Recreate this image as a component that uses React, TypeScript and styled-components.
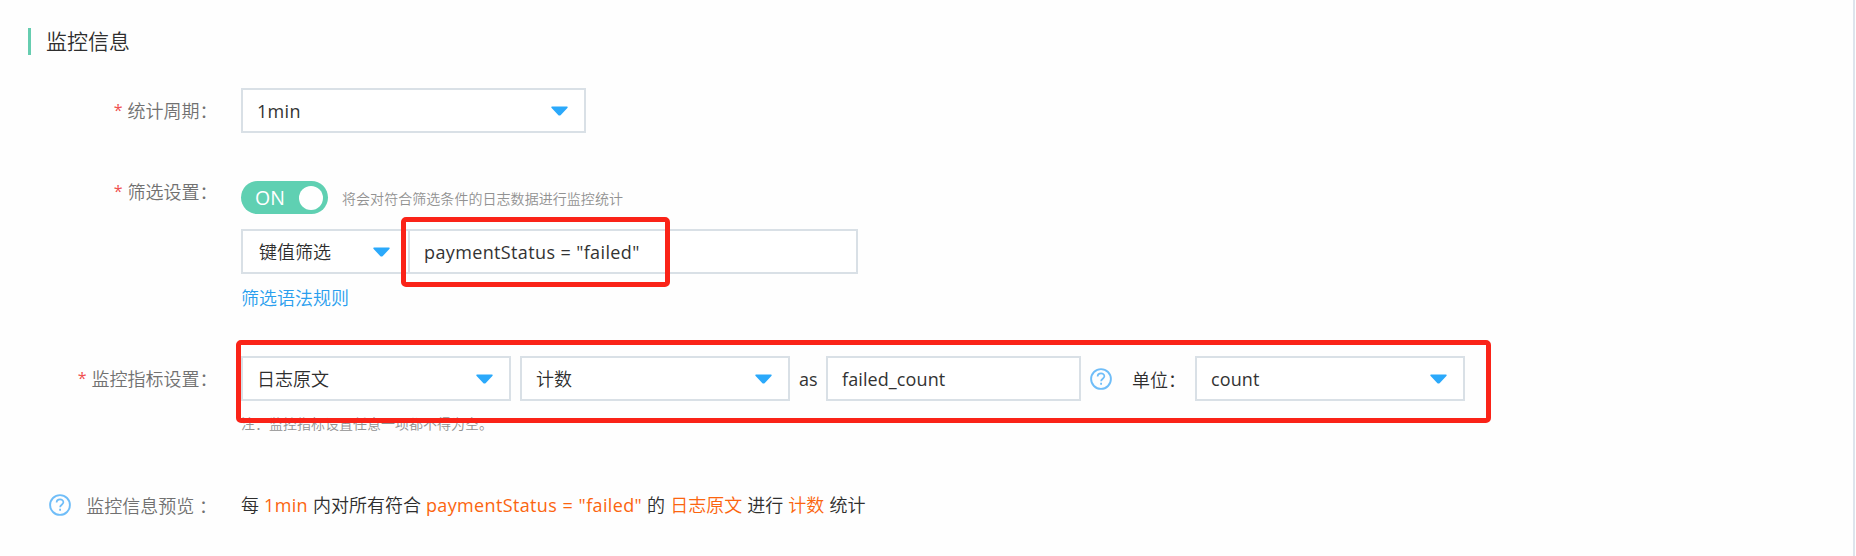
import React from "react";
import styled, { createGlobalStyle } from "styled-components";

const GlobalStyle = createGlobalStyle`
  body {
    margin: 0;
    background: #fefefe;
    font-family: "Open Sans", "Noto Sans CJK SC DemiLight", "Noto Sans CJK SC", sans-serif;
    font-size: 18px;
    color: #2e2e2e;
  }
  * { box-sizing: border-box; }
`;

const Panel = styled.main`
  width: 1855px;
  height: 556px;
  padding-top: 28px;
  border-right: 2px solid #dde4ec;
  overflow: hidden;
`;

const Title = styled.h2`
  margin: 0 0 33px 28px;
  padding-left: 15px;
  height: 27px;
  border-left: 3px solid #66cdb0;
  font-size: 21px;
  line-height: 27px;
  font-weight: 400;
`;

const Row = styled.section<{ $gap?: number }>`
  display: flex;
  align-items: flex-start;
  margin-bottom: ${(p) => p.$gap ?? 0}px;
`;

const Label = styled.div<{ $height: number; $pad?: number }>`
  display: flex;
  align-items: center;
  justify-content: flex-end;
  width: 241px;
  height: ${(p) => p.$height}px;
  padding-right: ${(p) => p.$pad ?? 23.5}px;
  color: #717171;
  white-space: pre;
`;

const Required = styled.span`
  margin-right: 5px;
  color: #f05050;
  font-size: 16px;
`;

const Stack = styled.div`
  display: flex;
  flex-direction: column;
  align-items: flex-start;
`;

const Line = styled.div<{ $top?: number }>`
  position: relative;
  display: flex;
  align-items: center;
  margin-top: ${(p) => p.$top ?? 0}px;
`;

const Field = styled.div<{ $width: number; $indent?: number; $joined?: boolean }>`
  display: flex;
  align-items: center;
  justify-content: space-between;
  width: ${(p) => p.$width}px;
  height: 45px;
  padding: 0 ${(p) => (p.$joined ? 18 : 16)}px 0 ${(p) => p.$indent ?? 14}px;
  border: 2px solid #d9e0e6;
  border-right-width: ${(p) => (p.$joined ? 0 : 2)}px;
  background: #fff;
  line-height: 24px;
  white-space: pre;
`;

const Latin = styled.span<{ $spacing?: number }>`
  color: #333;
  letter-spacing: ${(p) => p.$spacing ?? 0}px;
`;

const Switch = styled.div`
  display: flex;
  align-items: center;
  justify-content: space-between;
  width: 87px;
  height: 33px;
  padding: 0 5px 0 14px;
  border-radius: 17px;
  background: #5fd0b2;
  color: #fff;
  font-size: 19.5px;
`;

const Knob = styled.span`
  width: 24px;
  height: 24px;
  border-radius: 50%;
  background: #fff;
`;

const Hint = styled.span`
  margin-left: 14px;
  padding-top: 2px;
  color: #929292;
  font-size: 14px;
  line-height: 20px;
  letter-spacing: 0.05px;
`;

const Note = styled.div`
  margin-top: 13px;
  height: 20px;
  color: #929292;
  font-size: 14px;
  line-height: 20px;
`;

const RuleLink = styled.a`
  margin-top: 11px;
  color: #2a9fee;
  line-height: 26px;
`;

const Highlight = styled.div<{ $x: number; $y: number; $w: number; $h: number }>`
  position: absolute;
  left: ${(p) => p.$x}px;
  top: ${(p) => p.$y}px;
  width: ${(p) => p.$w}px;
  height: ${(p) => p.$h}px;
  border: 5px solid #fa2318;
  border-radius: 5px;
`;

const Joiner = styled.span<{ $width: number; $pad: number }>`
  width: ${(p) => p.$width}px;
  padding-left: ${(p) => p.$pad}px;
  white-space: nowrap;
`;

const Preview = styled.p`
  margin: 0;
  line-height: 26px;
  white-space: pre;
  word-spacing: 0.4px;
`;

const Value = styled.span<{ $spacing?: number }>`
  color: #fb650f;
  letter-spacing: ${(p) => p.$spacing ?? 0}px;
`;

const HelpSlot = styled.span<{ $left: number; $right: number }>`
  display: flex;
  margin: 0 ${(p) => p.$right}px 0 ${(p) => p.$left}px;
`;

const Arrow = () => (
  <svg width="17" height="10" viewBox="0 0 17 10">
    <path d="M1 0.5H16Q17.2 0.8 16.4 2L9.8 9Q8.5 10.1 7.2 9L0.6 2Q-0.2 0.8 1 0.5Z" fill="#2ba9fb" />
  </svg>
);

const Help = ({ left, right }: { left: number; right: number }) => (
  <HelpSlot $left={left} $right={right}>
    <svg width="22" height="22" viewBox="0 0 22 22" fill="none" stroke="#6fbdf8">
      <circle cx="11" cy="11" r="9.9" strokeWidth="1.9" />
      <path d="M7.6 8.6C7.6 4.2 14.5 4.3 14.4 8.3C14.3 10.7 11.1 10.8 11.1 13.3" strokeWidth="1.7" />
      <path d="M11.1 14.8V16.8" strokeWidth="1.8" />
    </svg>
  </HelpSlot>
);

export default function App() {
  return (
    <Panel>
      <GlobalStyle />
      <Title>监控信息</Title>

      <Row $gap={48}>
        <Label $height={44}><Required>*</Required>统计周期：</Label>
        <Field $width={345}><Latin $spacing={0.3}>1min</Latin><Arrow /></Field>
      </Row>

      <Row $gap={45}>
        <Label $height={20}><Required>*</Required>筛选设置：</Label>
        <Stack>
          <Line>
            <Switch>ON<Knob /></Switch>
            <Hint>将会对符合筛选条件的日志数据进行监控统计</Hint>
          </Line>
          <Line $top={15}>
            <Field $width={167} $indent={16} $joined>键值筛选<Arrow /></Field>
            <Field $width={450}><Latin $spacing={0.37}>paymentStatus = "failed"</Latin></Field>
            <Highlight $x={160} $y={-12} $w={269} $h={70} />
          </Line>
          <RuleLink>筛选语法规则</RuleLink>
        </Stack>
      </Row>

      <Row $gap={58}>
        <Label $height={44}><Required>*</Required>监控指标设置：</Label>
        <Stack>
          <Line>
            <Field $width={270}>日志原文<Arrow /></Field>
            <Joiner $width={9} $pad={0} />
            <Field $width={270}>计数<Arrow /></Field>
            <Joiner $width={36} $pad={9}><Latin>as</Latin></Joiner>
            <Field $width={255}><Latin $spacing={0.1}>failed_count</Latin></Field>
            <Help left={9} right={20} />
            <Joiner $width={63} $pad={0}>单位：</Joiner>
            <Field $width={270}><Latin $spacing={0.1}>count</Latin><Arrow /></Field>
            <Highlight $x={-5} $y={-16} $w={1255} $h={83} />
          </Line>
          <Note>注：监控指标设置任意一项都不得为空。</Note>
        </Stack>
      </Row>

      <Row>
        <Label $height={26} $pad={24}><Help left={0} right={15} />监控信息预览 ：</Label>
        <Preview>
          每 <Value $spacing={0.3}>1min</Value> 内对所有符合 <Value $spacing={0.35}>paymentStatus = "failed"</Value> 的 <Value>日志原文</Value> 进行 <Value>计数</Value> 统计
        </Preview>
      </Row>
    </Panel>
  );
}
